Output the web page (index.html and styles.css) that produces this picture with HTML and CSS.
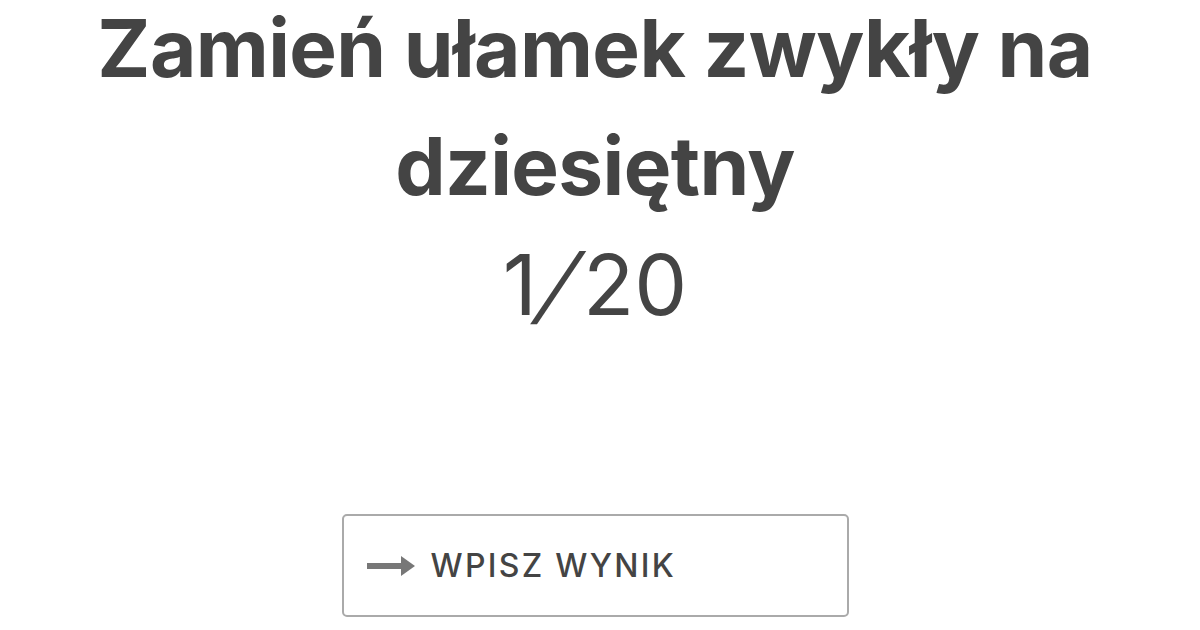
FILE: index.html
```html
<!DOCTYPE html>
<html lang="pl">
<head>
<meta charset="utf-8">
<link rel="stylesheet" href="styles.css">
</head>
<body>
<main class="page">
  <h1 class="title">Zamień ułamek zwykły na dziesiętny</h1>
  <div class="fraction">1<span class="slash">/</span>20</div>
  <button class="answer-btn" type="button">
    <svg class="arrow" width="50" height="22" viewBox="0 0 50 22" aria-hidden="true">
      <rect x="0" y="8" width="36" height="6" fill="#777"/>
      <polygon points="34,1 48,11 34,21" fill="#777"/>
    </svg>
    <span class="label">WPISZ WYNIK</span>
  </button>
</main>
</body>
</html>
```
FILE: styles.css
```css
html, body {
  margin: 0;
  padding: 0;
  background: #fff;
}
.page {
  width: 1190px;
  height: 630px;
  display: flex;
  flex-direction: column;
  align-items: center;
  font-family: Inter, "Liberation Sans", sans-serif;
  color: #444;
}
.title {
  margin: 0;
  margin-top: -11px;
  font-size: 80px;
  font-weight: 700;
  line-height: 118px;
  text-align: center;
  width: 1060px;
  letter-spacing: -0.6px;
}
.fraction {
  font-size: 84px;
  font-weight: 400;
  line-height: 100px;
  margin-top: 10px;
  font-feature-settings: "calt" 0, "frac" 0;
}
.slash {
  display: inline-block;
  transform: skewX(-22deg);
  margin: 0 9px 0 7px;
}
.answer-btn {
  margin-top: 179px;
  width: 507px;
  height: 103px;
  box-sizing: border-box;
  border: 2px solid #aaa;
  border-radius: 5px;
  background: #fff;
  display: flex;
  align-items: center;
  padding: 0 0 0 23px;
  gap: 14px;
  font-family: Inter, "Liberation Sans", sans-serif;
  color: #444;
}
.arrow {
  display: block;
}
.label {
  font-size: 32px;
  font-weight: 500;
  letter-spacing: 2.3px;
}
```
